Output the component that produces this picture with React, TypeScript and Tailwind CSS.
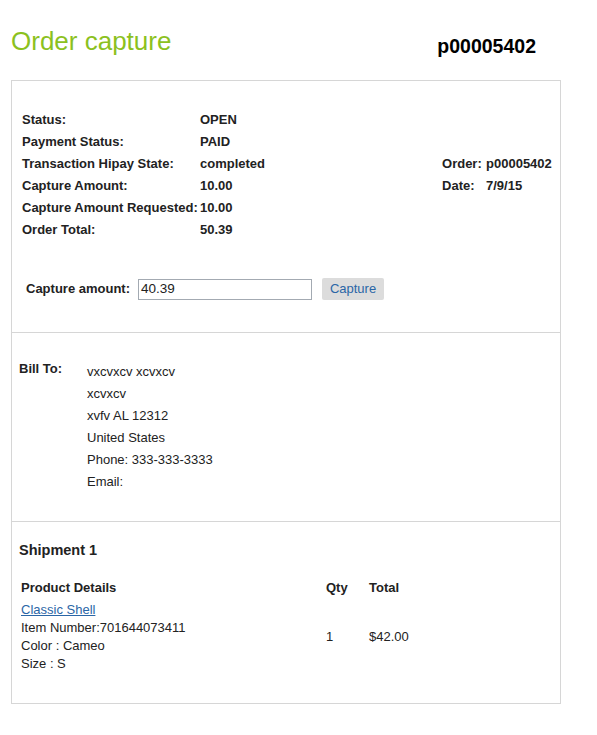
import React from "react";

const rows: [string, string][] = [
  ["Status:", "OPEN"],
  ["Payment Status:", "PAID"],
  ["Transaction Hipay State:", "completed"],
  ["Capture Amount:", "10.00"],
  ["Capture Amount Requested:", "10.00"],
  ["Order Total:", "50.39"],
];

const addr = [
  "vxcvxcv xcvxcv",
  "xcvxcv",
  "xvfv AL 12312",
  "United States",
  "Phone: 333-333-3333",
  "Email:",
];

export default function App() {
  return (
    <div
      className="min-h-[735px] w-[597px] bg-white text-[#222] pl-[11px]"
      style={{ fontFamily: '"Liberation Sans", Arial, sans-serif' }}
    >
      <div className="flex w-[550px] items-end pt-[26px] h-[80px]">
        <div className="text-[26px] leading-[30px] text-[#8cc11e] pb-[24px]">Order capture</div>
        <div className="ml-auto mr-[25px] text-[19.5px] font-bold leading-[22px] text-black pb-[23px]">
          p00005402
        </div>
      </div>
      <div className="w-[550px] border border-[#d6d6d6]">
        {/* section 1 */}
        <div className="h-[252px] border-b border-[#d6d6d6] pt-[28px]">
          <div className="flex">
            <div className="pl-[10px]">
              {rows.map(([l, v]) => (
                <div key={l} className="flex h-[22px] items-center text-[13px] font-bold">
                  <div className="w-[178px]">{l}</div>
                  <div>{v}</div>
                </div>
              ))}
            </div>
            <div className="ml-[177px] mt-[44px]">
              <div className="flex h-[22px] items-center text-[13px] font-bold">
                <div className="w-[44px]">Order:</div>
                <div>p00005402</div>
              </div>
              <div className="flex h-[22px] items-center text-[13px] font-bold">
                <div className="w-[44px]">Date:</div>
                <div>7/9/15</div>
              </div>
            </div>
          </div>
          <div className="mt-[37px] flex items-center pl-[14px]">
            <div className="w-[112px] text-[13px] font-bold">Capture amount:</div>
            <div className="flex h-[21px] w-[174px] items-center border border-[#a3aab2] pl-[2px] text-[13.5px]">
              40.39
            </div>
            <button className="ml-[10px] h-[22px] w-[62px] rounded-[2px] bg-[#dcdcdc] text-[13px] text-[#2b66a6]">
              Capture
            </button>
          </div>
        </div>
        {/* section 2 */}
        <div className="flex h-[189px] border-b border-[#d6d6d6] pl-[7px] pt-[26px]">
          <div className="w-[68px] pt-[2px] text-[13px] font-bold leading-[16px]">Bill To:</div>
          <div className="mt-[2px] text-[13px]">
            {addr.map((a) => (
              <div key={a} className="flex h-[22px] items-center">
                {a}
              </div>
            ))}
          </div>
        </div>
        {/* section 3 */}
        <div className="h-[181px] pl-[7px] pt-[18px]">
          <div className="text-[14.5px] font-bold leading-[20px]">Shipment 1</div>
          <div className="mt-[19px] flex pl-[2px] text-[13px]">
            <div className="w-[305px]">
              <div className="flex h-[18px] items-center font-bold">Product Details</div>
              <div className="mt-[4px] flex h-[18px] items-center text-[#2b66a6] underline">
                Classic Shell
              </div>
              <div className="flex h-[18px] items-center">Item Number:701644073411</div>
              <div className="flex h-[18px] items-center">Color : Cameo</div>
              <div className="flex h-[18px] items-center">Size : S</div>
            </div>
            <div className="w-[43px]">
              <div className="flex h-[18px] items-center font-bold">Qty</div>
              <div className="mt-[31px] flex h-[18px] items-center">1</div>
            </div>
            <div>
              <div className="flex h-[18px] items-center font-bold">Total</div>
              <div className="mt-[31px] flex h-[18px] items-center">$42.00</div>
            </div>
          </div>
        </div>
      </div>
    </div>
  );
}
